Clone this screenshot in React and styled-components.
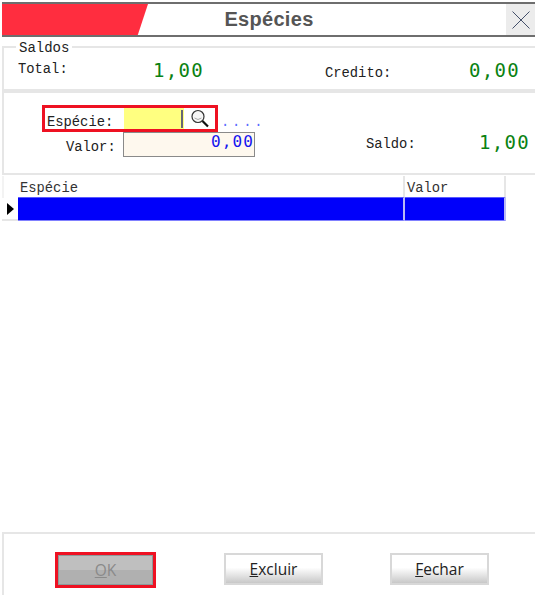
import styled, { createGlobalStyle } from 'styled-components';

const GlobalStyle = createGlobalStyle`
  html, body {
    margin: 0;
    background: #fff;
    overflow: hidden;
  }

  * {
    box-sizing: border-box;
  }
`;

const Page = styled.div`
  display: flex;
  flex-direction: column;
  width: 535px;
  height: 595px;
  padding: 2px 0 0 2px;
  font-family: "Liberation Mono", monospace;
  font-size: 13.8px;
  color: #222;
`;

const TitleBar = styled.header`
  display: flex;
  align-items: center;
  height: 35px;
  border-top: 2px solid #6e6e6e;
  border-bottom: 2px solid #6e6e6e;
`;

const Ribbon = styled.div`
  width: 146px;
  height: 100%;
  background: #ff2d3f;
  clip-path: polygon(0 0, 100% 0, 93% 100%, 0 100%);
`;

const Title = styled.h1`
  flex: 1;
  margin: 0;
  padding-right: 116px;
  font-family: "Liberation Sans", sans-serif;
  font-size: 20px;
  font-weight: 700;
  letter-spacing: 0.3px;
  text-align: center;
  color: #555;
`;

const CloseButton = styled.button`
  display: flex;
  align-items: center;
  justify-content: center;
  width: 29px;
  height: 100%;
  padding: 0;
  border: 0;
  background: #ececec;
`;

const Saldos = styled.fieldset`
  height: 54px;
  margin: 0;
  padding: 0 0 0 14px;
  border: 2px solid #e6e6e6;
  border-right: 0;
  min-width: 0;
`;

const Legend = styled.legend`
  padding: 4px 3px 0;
  margin-left: -2px;
  font-size: 14px;
  line-height: 15px;
`;

const SaldosRow = styled.div`
  display: flex;
  align-items: center;
  height: 30px;
  margin-top: -1px;
`;

const Label = styled.span`
  width: ${(props) => props.$width || 'auto'};
  margin-left: ${(props) => props.$left || 0};
  padding-top: ${(props) => props.$top || 0};
  padding-bottom: ${(props) => props.$bottom || 0};
  white-space: nowrap;
`;

const Amount = styled.span`
  width: ${(props) => props.$width};
  font-family: "DejaVu Sans Mono", monospace;
  font-size: 19px;
  letter-spacing: 1.3px;
  color: #0a8212;
  text-align: right;
  white-space: nowrap;
`;

const Panel = styled.section`
  display: flex;
  height: 84px;
  padding: 12px 0 0 38px;
  border: 2px solid #e6e6e6;
  border-right: 0;
`;

const Fields = styled.div`
  display: flex;
  flex-direction: column;
  width: 324px;
`;

const EspecieRow = styled.div`
  display: flex;
  align-items: center;
`;

const Highlight = styled.div`
  display: flex;
  align-items: center;
  flex-shrink: 0;
  width: 176px;
  height: 27px;
  padding-left: 2px;
  border: 3px solid #ee1122;
`;

const YellowInput = styled.div`
  display: flex;
  align-items: center;
  justify-content: flex-end;
  flex-shrink: 0;
  width: 60px;
  height: 100%;
  margin-left: 11px;
  padding-right: 1px;
  background: #ffff80;
`;

const Caret = styled.div`
  width: 2px;
  height: 18px;
  background: #667;
`;

const SearchButton = styled.button`
  display: flex;
  align-items: center;
  justify-content: center;
  flex-shrink: 0;
  width: 31px;
  height: 100%;
  padding: 0;
  border: 0;
  background: #fff;
`;

const Dots = styled.span`
  margin: 8px 0 0 3px;
  letter-spacing: 2.8px;
  color: #5a6cff;
`;

const ValorRow = styled.div`
  display: flex;
  align-items: center;
`;

const ValorInput = styled.div`
  width: 132px;
  height: 25px;
  margin-left: 7px;
  padding-right: 0;
  border: 1px solid #8a8a8a;
  background: #fef8ee;
  font-family: "DejaVu Sans Mono", monospace;
  font-size: 16px;
  line-height: 18px;
  letter-spacing: 1.1px;
  color: #1414f0;
  text-align: right;
`;

const SaldoBox = styled.div`
  display: flex;
  align-items: center;
  flex: 1;
  height: 24px;
  margin-top: 25px;
`;

const Table = styled.div`
  flex: 1;
  display: grid;
  grid-template-columns: 16px 387px 101px;
  grid-auto-rows: min-content;
  width: 504px;
  margin-top: 1px;
`;

const HeaderCell = styled.div`
  height: 22px;
  padding: 5px 0 0 2px;
  border-right: 2px solid #e6e6e6;
  border-bottom: 1px solid #5a5aff;
  color: #333;
`;

const Corner = styled.div`
  height: 22px;
  border-left: 2px solid #f3f3f3;
`;

const Indicator = styled.div`
  display: flex;
  align-items: center;
  padding-left: 5px;
  height: 23px;
  border-bottom: 2px solid #e6e6e6;
`;

const Arrow = styled.div`
  width: 0;
  height: 0;
  border-top: 6px solid transparent;
  border-bottom: 6px solid transparent;
  border-left: 7px solid #000;
`;

const BlueCell = styled.div`
  height: 23px;
  background: #0000fa;
  border-right: 2px solid #b9b9f5;
  border-bottom: 1px solid #8080ff;
`;

const Footer = styled.footer`
  display: flex;
  align-items: center;
  height: 63px;
  padding: 18px 0 7px 51px;
  border-top: 2px solid #e6e6e6;
  border-left: 2px solid #e6e6e6;
`;

const OkButton = styled.button`
  width: 101px;
  height: 36px;
  padding: 0;
  border: 3px solid #ee1122;
  outline: 1px solid #8c9a9a;
  outline-offset: -4px;
  background: linear-gradient(#bfbfbf 50%, #b0b0b0 50%);
  font-family: "Open Sans", sans-serif;
  font-size: 15.5px;
  color: #8a8a8a;
`;

const ActionButton = styled.button`
  width: 99px;
  height: 32px;
  margin-bottom: 2px;
  margin-left: ${(props) => props.$left};
  padding: 0;
  border: 2px solid #d8d8d8;
  background: linear-gradient(#fff 45%, #c8c8c8);
  font-family: "Open Sans", sans-serif;
  font-size: 15.5px;
  color: #222;
`;

const Key = styled.span`
  text-decoration: underline;
`;

export default function App() {
  return (
    <Page>
      <GlobalStyle />
      <TitleBar>
        <Ribbon />
        <Title>Espécies</Title>
        <CloseButton type="button" aria-label="Fechar">
          <svg width="20" height="20" viewBox="0 0 20 20">
            <path d="M1.5 1.5 L18.5 18.5 M18.5 1.5 L1.5 18.5" stroke="#44506a" strokeWidth="1" fill="none" />
          </svg>
        </CloseButton>
      </TitleBar>

      <Saldos>
        <Legend>Saldos</Legend>
        <SaldosRow>
          <Label $width="50px" $bottom="2px">Total:</Label>
          <Amount $width="136px">1,00</Amount>
          <Label $left="121px" $width="68px" $top="6px">Credito:</Label>
          <Amount $width="127px">0,00</Amount>
        </SaldosRow>
      </Saldos>

      <Panel>
        <Fields>
          <EspecieRow>
            <Highlight>
              <Label $top="7px">Espécie:</Label>
              <YellowInput><Caret /></YellowInput>
              <SearchButton type="button" aria-label="Buscar">
                <svg width="20" height="20" viewBox="0 0 20 20">
                  <circle cx="8" cy="7.5" r="6" stroke="#333" strokeWidth="1.2" fill="#f6f6f6" />
                  <path d="M4.5 9 Q8 12 11.5 9" stroke="#aaa" fill="none" />
                  <path d="M12.5 12 L18 17.5" stroke="#111" strokeWidth="2.2" />
                </svg>
              </SearchButton>
            </Highlight>
            <Dots>....</Dots>
          </EspecieRow>
          <ValorRow>
            <Label $left="24px" $width="50px" $top="5px">Valor:</Label>
            <ValorInput>0,00</ValorInput>
          </ValorRow>
        </Fields>
        <SaldoBox>
          <Label $width="50px" $top="4px">Saldo:</Label>
          <Amount $width="114px">1,00</Amount>
        </SaldoBox>
      </Panel>

      <Table>
        <Corner />
        <HeaderCell>Espécie</HeaderCell>
        <HeaderCell>Valor</HeaderCell>
        <Indicator><Arrow /></Indicator>
        <BlueCell />
        <BlueCell />
      </Table>

      <Footer>
        <OkButton type="button">
          <Key>O</Key>
          K
        </OkButton>
        <ActionButton type="button" $left="68px">
          <Key>E</Key>
          xcluir
        </ActionButton>
        <ActionButton type="button" $left="67px">
          <Key>F</Key>
          echar
        </ActionButton>
      </Footer>
    </Page>
  );
}
